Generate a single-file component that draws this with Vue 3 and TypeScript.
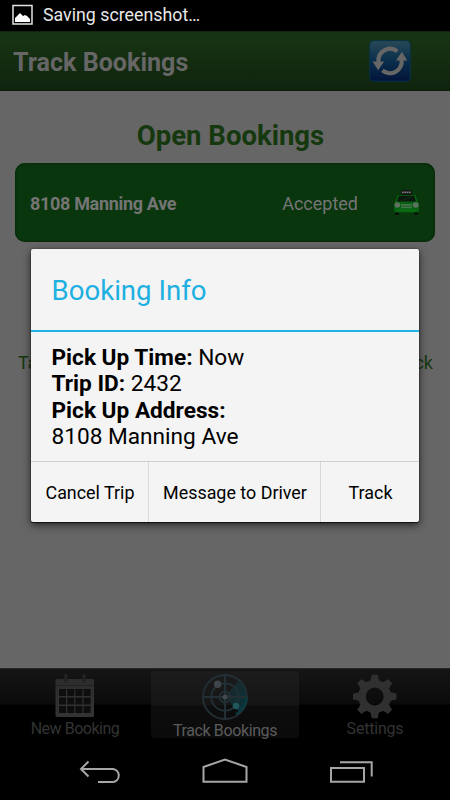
<script setup lang="ts">
interface Detail {
  label: string
  value: string
}

const details: Detail[] = [
  { label: 'Pick Up Time:', value: 'Now' },
  { label: 'Trip ID:', value: '2432' },
  { label: 'Pick Up Address:', value: '8108 Manning Ave' },
]

const teeth: number[] = [0, 45, 90, 135, 180, 225, 270, 315]
const rows: number[] = [0, 1, 2]
const columns: number[] = [0, 1, 2, 3]
</script>

<template>
  <div class="screen">
    <div class="status">
      <svg class="status-icon" width="22" height="22" viewBox="0 0 22 22">
        <rect x="1" y="1.5" width="19" height="18.5" fill="none" stroke="#e4e4e4" stroke-width="1.5" />
        <path d="M3 18V14L6 11L8 9L11 12L13 11L15 12L18 15V18Z" fill="#fff" />
      </svg>
      <span class="status-text">Saving screenshot…</span>
    </div>

    <header class="header">
      <h1 class="header-title">Track Bookings</h1>
      <svg class="refresh" width="42" height="42" viewBox="0 0 42 42">
        <defs>
          <linearGradient id="refreshFill" x1="0" y1="0" x2="0" y2="1">
            <stop offset="0" stop-color="#2a4a57" />
            <stop offset=".5" stop-color="#092e4c" />
            <stop offset="1" stop-color="#03143a" />
          </linearGradient>
        </defs>
        <rect x=".7" y=".7" width="40.6" height="40.6" rx="4" fill="url(#refreshFill)" stroke="#07344a" stroke-width="1" />
        <g fill="none" stroke="#666" stroke-width="4.2">
          <path d="M9.5 22A11.7 11.7 0 0 1 28.3 11.3" />
          <path d="M32.6 20A11.7 11.7 0 0 1 13.4 30.4" />
        </g>
        <path d="M3.5 21.5H15L9.2 30.2Z M27 20.5H38.3L32.9 11.7Z" fill="#666" />
      </svg>
    </header>

    <main class="content">
      <h2 class="heading">Open Bookings</h2>
      <div class="booking">
        <strong class="booking-address">8108 Manning Ave</strong>
        <span class="booking-state">Accepted</span>
        <svg class="taxi" width="27" height="26" viewBox="0 0 27 26">
          <rect x="8" y="0" width="11" height="5" rx="1.5" fill="#101410" />
          <path d="M9 2.3H18" stroke="#777" stroke-width="1.8" stroke-dasharray="1.8 .5" />
          <path d="M2 21H6V24Q4 26 2 24Z M21 21H25V24Q23 26 21 24Z" fill="#070b07" />
          <path d="M4.5 5H22.5L25 12Q26.5 14 26 21Q25 23 22 22.5H5Q1 23 1 21Q.5 14 2 12Z" fill="#075f10" />
          <path d="M6 5.8H21L23 11.5H4Z" fill="#0b180d" />
          <path d="M7 10.8L17 6.5H20L11 10.8Z" fill="#152318" />
          <circle cx="4.3" cy="15" r="2.8" fill="#607362" />
          <circle cx="22.7" cy="15" r="2.8" fill="#607362" />
          <path d="M8 14.9H19M8 17.3H19" stroke="#45734a" stroke-width="1.7" />
          <path d="M4 20.2H23" stroke="#0a7a15" stroke-width="1" />
        </svg>
      </div>
      <div class="hint"><span>Tap</span><span>Track</span></div>
    </main>

    <nav class="tabs">
      <div class="tab">
        <svg class="tab-icon" width="48" height="48" viewBox="0 0 48 48">
          <defs>
            <linearGradient id="calendarFill" x1="0" y1="0" x2="0" y2="1">
              <stop offset="0" stop-color="#2c2c2c" /><stop offset="1" stop-color="#343434" />
            </linearGradient>
          </defs>
          <rect x="4.5" y="6" width="38.5" height="38" rx="1.5" fill="url(#calendarFill)" />
          <path d="M5 12.5H43" stroke="#222" />
          <path d="M14.8 1V9.5M33 1V9.5" stroke="#222" stroke-width="3.2" />
          <template v-for="row in rows" :key="row">
            <rect v-for="column in columns" :key="column" :x="8 + column * 8.2" :y="16 + row * 8.5" width="7" height="7" fill="#0e0e0e" />
          </template>
        </svg>
        <span class="tab-label">New Booking</span>
      </div>
      <div class="tab active">
        <svg class="tab-icon" width="48" height="48" viewBox="0 0 48 48">
          <defs>
            <linearGradient id="sweep" x1="0" y1="0" x2="1" y2="1">
              <stop offset="0" stop-color="#1d2529" /><stop offset="1" stop-color="#07343a" />
            </linearGradient>
          </defs>
          <path d="M24 24L38 7A22 22 0 0 1 39 40Z" fill="url(#sweep)" />
          <g fill="none" stroke="#223035" stroke-width="1.8">
            <circle cx="24" cy="24" r="22" />
            <circle cx="24" cy="24" r="13.7" />
            <circle cx="24" cy="24" r="5.5" />
            <path d="M24 2V46M2 24H46" stroke-width="2.2" />
          </g>
          <path d="M35 41A22 22 0 0 0 46 24" fill="none" stroke="#073d43" stroke-width="2" />
          <circle cx="24" cy="24" r="2.6" fill="#40494c" />
          <circle cx="16.6" cy="11.3" r="3.7" fill="#3e4447" />
          <circle cx="35" cy="33" r="3.3" fill="#22575c" />
        </svg>
        <span class="tab-label">Track Bookings</span>
      </div>
      <div class="tab">
        <svg class="tab-icon" width="48" height="48" viewBox="0 0 48 48">
          <circle cx="23.7" cy="23.5" r="12.7" fill="none" stroke="#303030" stroke-width="7.5" />
          <path v-for="angle in teeth" :key="angle" d="M18.9 9L20.4 4V2.7Q20.4 1.8 21.4 1.8H26Q27 1.8 27 2.7V4L28.5 9Z" fill="#303030" :transform="`rotate(${angle} 23.7 23.5)`" />
        </svg>
        <span class="tab-label settings-label">Settings</span>
      </div>
    </nav>

    <footer class="system">
      <svg width="450" height="60" viewBox="0 0 450 60" fill="none" stroke="#a6a6a6" stroke-width="2">
        <path d="M88.5 21.5L81 29L88.5 36.5M81 29H113.3A6.6 6.6 0 0 1 113.3 42H98" />
        <path d="M203.5 27L225 19.5L246.5 27V41.7H203.5Z" />
        <path d="M331 28H364V41.7H331ZM340 22.2H371.7V36.5" />
      </svg>
    </footer>

    <section class="dialog">
      <h3 class="dialog-title"><span>Booking Info</span></h3>
      <div class="dialog-body">
        <div v-for="detail in details" :key="detail.label" class="detail">
          <b>{{ detail.label }}</b> <span>{{ detail.value }}</span>
        </div>
      </div>
      <div class="actions">
        <button class="action cancel">Cancel Trip</button>
        <button class="action message">Message to Driver</button>
        <button class="action track">Track</button>
      </div>
    </section>
  </div>
</template>

<style>
body {
  background: #000;
}
</style>

<style scoped>
.screen {
  position: relative;
  display: flex;
  flex-direction: column;
  width: 450px;
  height: 800px;
  overflow: hidden;
  background: #000;
  font-family: Roboto, "Liberation Sans", sans-serif;
}
.status {
  display: flex;
  align-items: center;
  height: 31px;
  padding: 0 0 1px 12px;
  box-sizing: border-box;
}
.status-text {
  margin-left: 9px;
  font-size: 17.8px;
  line-height: 22px;
  color: #e8e8e8;
  white-space: nowrap;
}
.header {
  display: flex;
  align-items: center;
  justify-content: space-between;
  height: 60px;
  padding: 0 39px 0 13px;
  box-sizing: border-box;
  background: linear-gradient(#173513, #10240e);
  border-top: 1px solid #10240e;
  border-bottom: 1px solid #0b1d09;
}
.header-title {
  margin: 3px 0 0;
  font-size: 25.1px;
  line-height: 30px;
  font-weight: 700;
  color: #666;
}
.content {
  height: 577px;
  padding: 28px 15px 0;
  box-sizing: border-box;
  background: #666;
}
.heading {
  margin: 0 0 11px 11px;
  text-align: center;
  font-size: 27.5px;
  line-height: 33px;
  font-weight: 700;
  color: #15380f;
}
.booking {
  display: flex;
  align-items: center;
  height: 79px;
  padding: 1px 15px 0;
  box-sizing: border-box;
  border-radius: 10px;
  background: #0a360e;
  box-shadow: inset 0 0 2px 1px #07290a;
  font-size: 18px;
  color: #757575;
}
.booking-address {
  font-size: 18px;
  letter-spacing: -.32px;
}
.booking-state {
  margin-left: auto;
}
.taxi {
  margin-left: 35px;
}
.hint {
  display: flex;
  justify-content: space-between;
  margin-top: 110px;
  padding: 0 2px 0 3px;
  font-size: 18px;
  line-height: 22px;
  color: #15380f;
}
.tabs {
  display: flex;
  height: 72px;
  box-sizing: border-box;
  padding-top: 2px;
  border-top: 1px solid #252525;
  background: linear-gradient(#151515 0, #0b0b0b 35px, #000 36px);
}
.tab {
  display: flex;
  flex-direction: column;
  align-items: center;
  width: 148px;
  height: 67px;
  margin: 0 1px;
  color: #333;
  font-size: 16px;
  line-height: 20px;
}
.active {
  border-radius: 4px;
  background: linear-gradient(#1c1c1c 0, #151515 34px, #0d0d0d 35px, #0b0b0b);
  color: #5b5b5b;
}
.tab-icon {
  margin-top: 2px;
  flex: none;
}
.tab-label {
  margin-top: -2px;
  letter-spacing: -.48px;
}
.settings-label {
  letter-spacing: -.2px;
}
.active .tab-label {
  margin-top: 0;
  letter-spacing: -.38px;
}
.system {
  height: 60px;
}
.system svg {
  display: block;
}
.dialog {
  position: absolute;
  left: 31px;
  top: 249px;
  display: flex;
  flex-direction: column;
  width: 388px;
  height: 273px;
  border-radius: 2px;
  background: #f4f4f4;
  color: #000;
  box-shadow: 0 1px 1px rgba(0, 0, 0, .65), 0 0 2px rgba(0, 0, 0, .5), 0 3px 9px rgba(0, 0, 0, .65);
}
.dialog-title {
  display: flex;
  align-items: center;
  height: 83px;
  margin: 0;
  padding: 1px 20.5px 0;
  box-sizing: border-box;
  border-bottom: 2px solid #1eb4e5;
  font-size: 27.6px;
  font-weight: 400;
  color: #1eb0e1;
}
.dialog-body {
  flex: 1;
  padding: 13px 20px 0 20.5px;
  font-size: 22.65px;
  line-height: 26.3px;
}
.detail {
  max-width: 220px;
}
.actions {
  display: flex;
  height: 61px;
  box-sizing: border-box;
  border-top: 1px solid #d1d1d1;
}
.action {
  padding: 1px 0 0 1px;
  border: 0;
  border-right: 1px solid #d8d8d8;
  background: none;
  font-family: inherit;
  font-size: 17.9px;
  color: #000;
  white-space: nowrap;
}
.cancel {
  width: 118px;
}
.message {
  width: 172px;
}
.track {
  flex: 1;
  border-right: 0;
}
</style>
